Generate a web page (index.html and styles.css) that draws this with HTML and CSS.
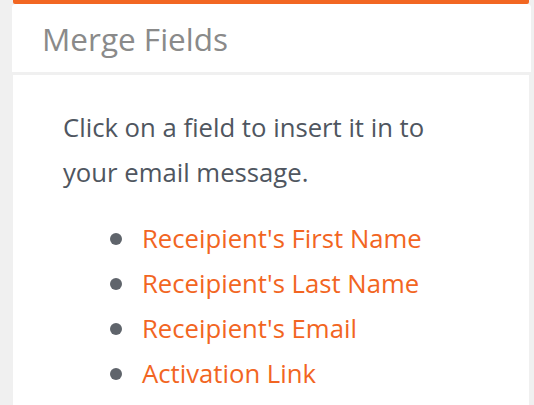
FILE: index.html
```html
<!DOCTYPE html>
<html>
<head>
<meta charset="utf-8">
<link rel="stylesheet" href="styles.css">
</head>
<body>
<div class="card">
  <div class="accent"></div>
  <div class="card-header"><h2 class="title">Merge Fields</h2></div>
  <div class="card-body">
    <p class="intro">Click on a field to insert it in to your email message.</p>
    <ul class="fields">
      <li><a href="#">Receipient's First Name</a></li>
      <li><a href="#">Receipient's Last Name</a></li>
      <li><a href="#">Receipient's Email</a></li>
      <li><a href="#">Activation Link</a></li>
    </ul>
  </div>
</div>
</body>
</html>
```
FILE: styles.css
```css
html, body {
  margin: 0;
  padding: 0;
  background: #f0f0f0;
  font-family: "Open Sans", "Noto Sans", sans-serif;
  overflow: hidden;
}
.card {
  margin-left: 12px;
  width: 519px;
}
.accent {
  height: 4px;
  margin: 0 2px 0 1px;
  background: #f26722;
  border-radius: 0 0 2px 2px;
}
.card-header {
  height: 68px;
  background: #fff;
  border-radius: 4px 4px 0 0;
  display: flex;
  align-items: center;
  padding-left: 30px;
  margin-bottom: 3px;
}
.title {
  margin: 1px 0 0 0;
  font-size: 31.5px;
  font-weight: 400;
  color: #8a8a8a;
}
.card-body {
  box-sizing: border-box;
  margin: 0 2px 0 1px;
  background: #fff;
  padding: 30px 40px 0 50px;
  height: 330px;
}
.intro {
  margin: 0;
  font-size: 25.7px;
  line-height: 45px;
  color: #4f5660;
  width: 380px;
}
.fields {
  list-style: none;
  margin: 21px 0 0 0;
  padding: 0 0 0 79px;
}
.fields li {
  position: relative;
  font-size: 25.7px;
  line-height: 45px;
}
.fields li::before {
  content: "";
  position: absolute;
  left: -32px;
  top: 17px;
  width: 12px;
  height: 12px;
  border-radius: 50%;
  background: #5f646b;
}
.fields a {
  color: #f26522;
  text-decoration: none;
}
```
